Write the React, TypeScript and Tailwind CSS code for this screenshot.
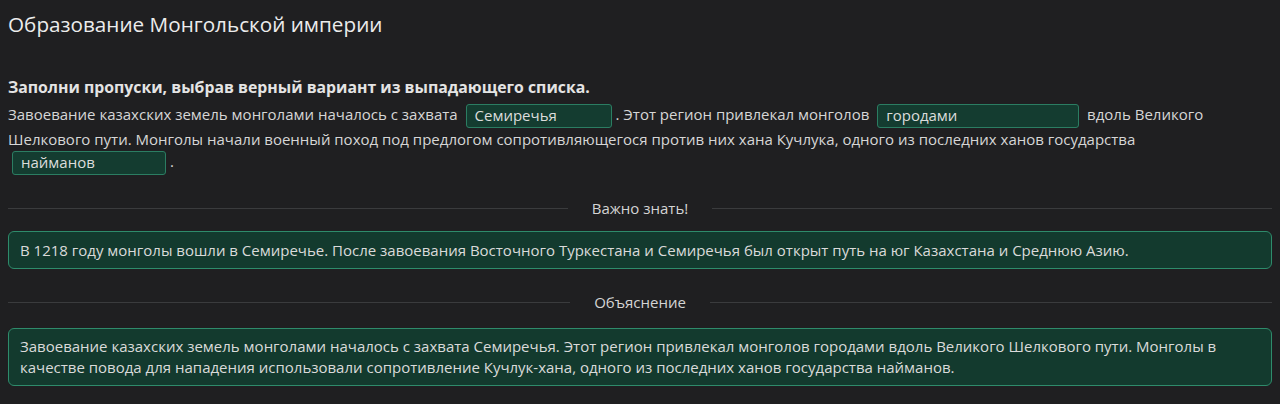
import React from 'react';

const font = { fontFamily: '"Open Sans", "Noto Sans", sans-serif' };

const Blank: React.FC<{ value: string; width: string }> = ({ value, width }) => (
  <span
    className={`inline-block h-6 ${width} mx-1 align-middle rounded-[3px] border border-[#2b7d62] bg-[#143c30] pl-2 text-left leading-[20px] text-[#dcdcdc]`}
  >
    {value}
  </span>
);

const Divider: React.FC<{ label: string }> = ({ label }) => (
  <div className="flex items-center gap-6 h-[22px]">
    <div className="flex-1 h-px bg-[#3a3b3d]" />
    <span className="text-[15px] text-[#d4d4d4]">{label}</span>
    <div className="flex-1 h-px bg-[#3a3b3d]" />
  </div>
);

export default function App() {
  return (
    <div className="min-h-[404px] bg-[#1f1f21] px-2 pt-[10px] text-[#d6d6d6]" style={font}>
      <h1 className="text-[20.7px] leading-[28px] text-[#ececec]">Образование Монгольской империи</h1>

      <p className="mt-[38px] text-[15.8px] leading-[22px] font-bold text-[#e4e4e4]">
        Заполни пропуски, выбрав верный вариант из выпадающего списка.
      </p>

      <p className="mt-[5px] text-[15px] leading-[22.5px]">
        Завоевание казахских земель монголами началось с захвата <Blank value="Семиречья" width="w-[146px]" />. Этот
        регион привлекал монголов <Blank value="городами" width="w-[202px]" /> вдоль Великого Шелкового пути. Монголы
        начали военный поход под предлогом сопротивляющегося против них хана Кучлука, одного из последних ханов
        государства <Blank value="найманов" width="w-[154px]" />.
      </p>

      <div className="mt-[22px]">
        <Divider label="Важно знать!" />
      </div>

      <div className="mt-[12px] rounded-md border border-[#2e8b6b] bg-[#133a2e] px-[11px] py-[7px] text-[15px] leading-[22px] text-[#dadada]">
        В 1218 году монголы вошли в Семиречье. После завоевания Восточного Туркестана и Семиречья был открыт путь на юг
        Казахстана и Среднюю Азию.
      </div>

      <div className="mt-[22px]">
        <Divider label="Объяснение" />
      </div>

      <div className="mt-[15px] rounded-md border border-[#2e8b6b] bg-[#133a2e] px-[11px] py-[7px] text-[15px] leading-[21px] text-[#dadada]">
        Завоевание казахских земель монголами началось с захвата Семиречья. Этот регион привлекал монголов городами вдоль
        Великого Шелкового пути. Монголы в качестве повода для нападения использовали сопротивление Кучлук-хана, одного
        из последних ханов государства найманов.
      </div>
    </div>
  );
}
